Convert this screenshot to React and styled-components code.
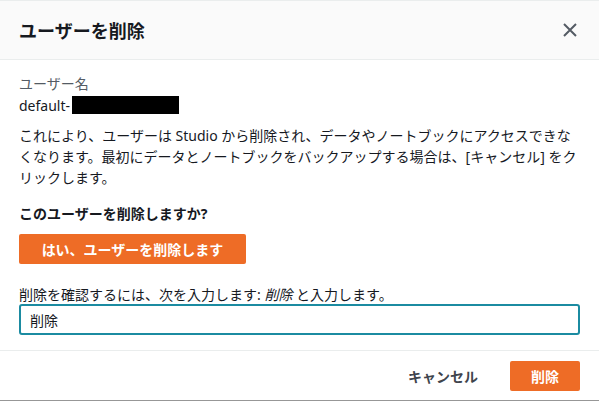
import { useState } from "react";
import styled, { createGlobalStyle } from "styled-components";

const GlobalStyle = createGlobalStyle`
  body {
    margin: 0;
    background: #ffffff;
    font-family: "Noto Sans", "Noto Sans CJK JP", sans-serif;
    color: #16191f;
  }
`;

const Dialog = styled.div`
  width: 599px;
  height: 401px;
  display: flex;
  flex-direction: column;
  box-sizing: border-box;
  border-bottom: 1px solid #979797;
  background: #ffffff;
`;

const Header = styled.div`
  height: 60px;
  box-sizing: border-box;
  display: flex;
  align-items: center;
  justify-content: space-between;
  padding: 0 20px 0 19px;
  background: #fafafa;
  border-top: 1px solid #eaeded;
  border-bottom: 1px solid #eaeded;
`;

const Title = styled.h2`
  margin: 0;
  font-size: 18px;
  font-weight: 700;
  color: #16191f;
`;

const CloseButton = styled.button`
  border: none;
  background: none;
  padding: 0;
  width: 18px;
  height: 18px;
  display: flex;
  align-items: center;
  justify-content: center;
  cursor: pointer;
`;

const Body = styled.div`
  flex: 1;
  padding: 13px 19px 0 19px;
  display: flex;
  flex-direction: column;
  font-size: 14px;
  line-height: 21px;
`;

const FieldLabel = styled.div`
  color: #545b64;
`;

const UserName = styled.div`
  display: flex;
  align-items: center;
  height: 22px;
`;

const Redacted = styled.span`
  display: inline-block;
  width: 107px;
  height: 18px;
  margin-left: 2px;
  background: #000;
`;

const Description = styled.p`
  margin: 9px 0 0 0;
  line-height: 21px;
`;

const Question = styled.div`
  margin-top: 15px;
  font-weight: 700;
`;

const Button = styled.button`
  font-family: inherit;
  font-size: 14px;
  font-weight: 700;
  color: #ffffff;
  background: #ee6c26;
  border: none;
  border-radius: 2px;
  height: 30px;
  padding: 0;
  cursor: pointer;
`;

const ConfirmButton = styled(Button)`
  margin-top: 10px;
  align-self: flex-start;
  width: 227px;
`;

const ConfirmLabel = styled.div`
  margin-top: 20px;
  & em {
    font-style: italic;
  }
`;

const Input = styled.input`
  margin-top: -1px;
  height: 31px;
  box-sizing: border-box;
  width: 100%;
  border: 2px solid #1b8ba1;
  border-radius: 3px;
  padding: 0 9px;
  font-family: inherit;
  font-size: 14px;
  color: #16191f;
  outline: none;
`;

const Footer = styled.div`
  height: 50px;
  box-sizing: border-box;
  border-top: 1px solid #eaeded;
  display: flex;
  align-items: center;
  justify-content: flex-end;
  gap: 32px;
  padding: 0 19px 0 0;
`;

const TextButton = styled.button`
  border: none;
  background: none;
  font-family: inherit;
  font-size: 14px;
  font-weight: 700;
  color: #3f454d;
  padding: 0;
  cursor: pointer;
`;

const DeleteButton = styled(Button)`
  width: 70px;
`;

export default function App() {
  const [value, setValue] = useState("削除");

  return (
    <>
      <GlobalStyle />
      <Dialog>
        <Header>
          <Title>ユーザーを削除</Title>
          <CloseButton aria-label="閉じる">
            <svg width="14" height="14" viewBox="0 0 14 14">
              <path
                d="M1 1 L13 13 M13 1 L1 13"
                stroke="#545b64"
                strokeWidth="2"
                fill="none"
              />
            </svg>
          </CloseButton>
        </Header>
        <Body>
          <FieldLabel>ユーザー名</FieldLabel>
          <UserName>
            default-<Redacted />
          </UserName>
          <Description>
            これにより、ユーザーは Studio から削除され、データやノートブックにアクセスできなくなります。最初にデータとノートブックをバックアップする場合は、[キャンセル] をクリックします。
          </Description>
          <Question>このユーザーを削除しますか?</Question>
          <ConfirmButton>はい、ユーザーを削除します</ConfirmButton>
          <ConfirmLabel>
            削除を確認するには、次を入力します: <em>削除</em> と入力します。
          </ConfirmLabel>
          <Input value={value} onChange={(e) => setValue(e.target.value)} />
        </Body>
        <Footer>
          <TextButton>キャンセル</TextButton>
          <DeleteButton>削除</DeleteButton>
        </Footer>
      </Dialog>
    </>
  );
}
